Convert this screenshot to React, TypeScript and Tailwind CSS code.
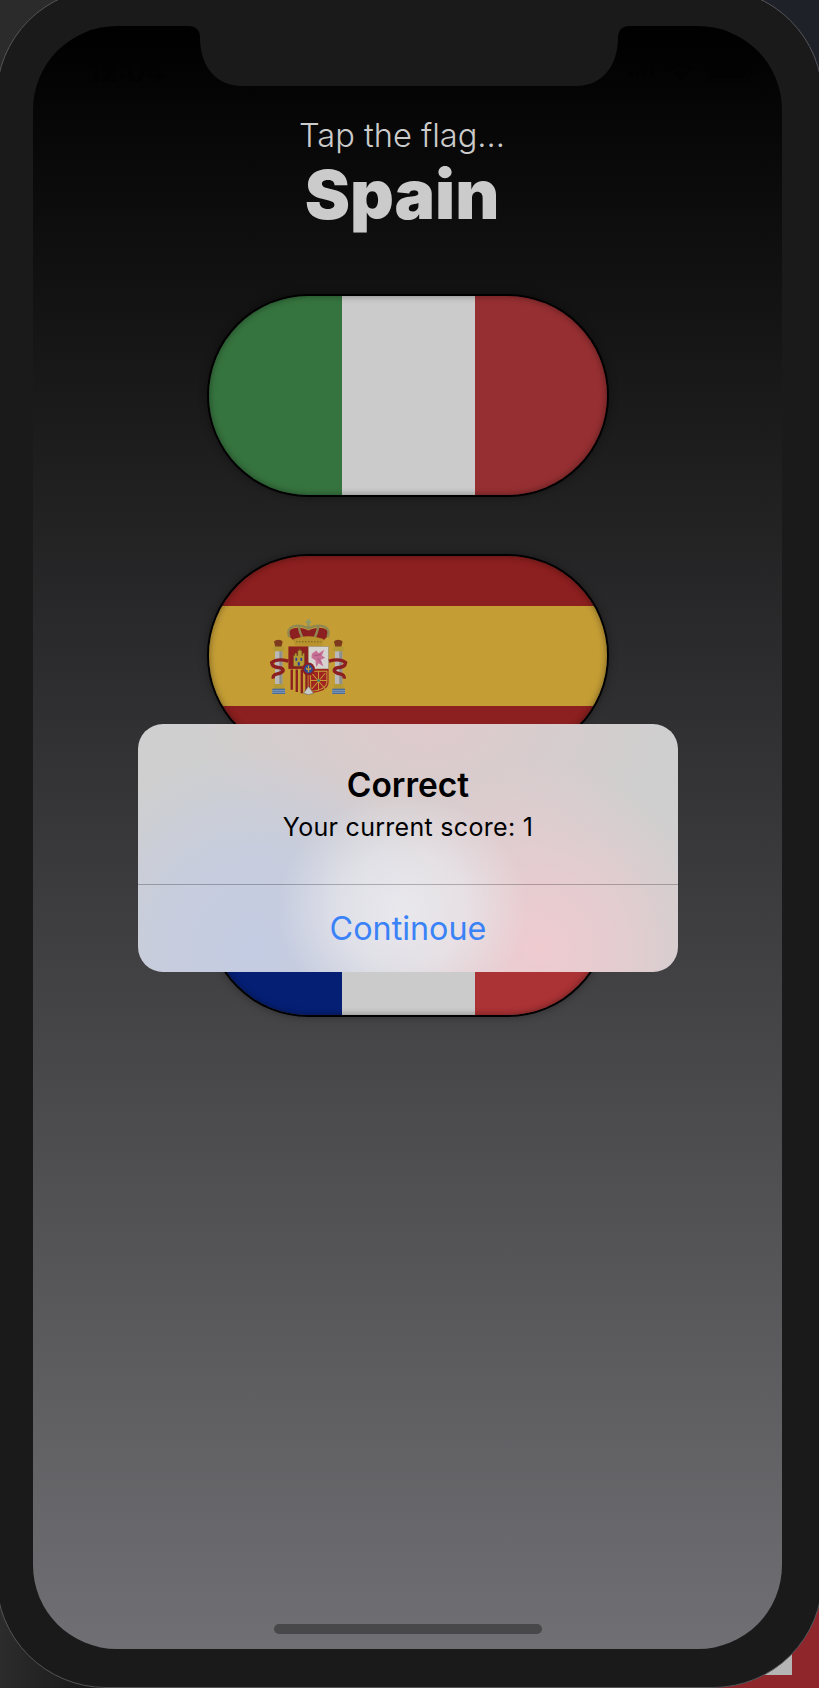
function Notch() {
  return (
    <svg width="442" height="60" viewBox="0 0 442 60" className="absolute top-0 left-[155px]">
      <path d="M0 0C8 0 12 4 12 12C12 40 28 60 54 60H388C414 60 430 40 430 12C430 4 434 0 442 0Z" fill="#1a1a1a" />
    </svg>
  )
}

function StatusBar() {
  return (
    <div className="h-[74px] pt-[30px] pl-[55px] pr-[29px] flex items-start justify-between text-[#020202]">
      <span className="text-[29px] leading-[32px] font-medium">12:04</span>
      <div className="flex items-center gap-[14px] h-[32px]">
        <div className="flex items-end gap-[3px] h-[10px]">
          <span className="w-[4px] h-[5px] bg-[#020202] rounded-[1px]" />
          <span className="w-[4px] h-[6px] bg-[#020202] rounded-[1px]" />
          <span className="w-[4px] h-[8px] bg-[#020202] rounded-[1px]" />
          <span className="w-[4px] h-[10px] bg-[#020202] rounded-[1px]" />
        </div>
        <svg width="26" height="19" viewBox="0 0 26 19" fill="none" stroke="#020202" strokeWidth="3">
          <path d="M2 7C8 1 18 1 24 7M6.500 11.500C10 8 16 8 19.500 11.500" />
          <path d="M9.500 14.500L13 18L16.500 14.500C14.500 12.700 11.500 12.700 9.500 14.500Z" fill="#020202" stroke="none" />
        </svg>
        <div className="flex items-center gap-[1px]">
          <div className="w-[41px] h-[20px] rounded-[5px] border border-[#020202] p-[2px]">
            <div className="w-full h-full rounded-[3px] bg-[#020202]" />
          </div>
          <span className="w-[3px] h-[7px] rounded-r-[2px] bg-[#020202]" />
        </div>
      </div>
    </div>
  )
}

function CoatOfArms() {
  // coordinates follow a 720x600 crop of the flag, so the viewBox is that crop's window
  return (
    <svg width="79" height="79" viewBox="240 230 236 236" className="shrink-0 ml-[61px]">
      {/* crown */}
      <path d="M295 285C290 262 325 255 355 270C385 255 420 262 415 285L395 305H315Z" fill="#8c1f1f" />
      <path d="M298 290C283 256 325 248 355 264C385 248 427 256 412 290M355 264V245M325 256C328 275 335 290 340 300M385 256C382 275 375 290 370 300" fill="none" stroke="#8f8850" strokeWidth="7" />
      <path d="M352 236h6v6h5v6h-5v8h-6v-8h-5v-6h5z" fill="#8f9a6a" />
      <path d="M308 298C335 284 375 284 402 298L394 316H316Z" fill="#b8922c" />
      <path d="M318 304h74" stroke="#6c5a20" strokeWidth="3" strokeDasharray="4 5" />
      {/* shield */}
      <rect x="295" y="318" width="60" height="67" fill="#8c1f1f" />
      <rect x="355" y="318" width="60" height="67" fill="#d6d2d0" stroke="#9a8f70" strokeWidth="2" />
      <path d="M295 385H355V458C325 460 295 445 295 420Z" fill="#c49d35" />
      <path d="M305 387V447M320 387V454M335 387V458M349 387V458" stroke="#8c1f1f" strokeWidth="7" />
      <path d="M355 385H415V425C415 448 385 456 355 458Z" fill="#a02420" />
      <path d="M360 392L410 392L410 425C408 442 385 450 362 452ZM385 392V450M360 420H410M365 398L405 445M405 398L365 445" fill="none" stroke="#c49d35" strokeWidth="3" />
      <circle cx="385" cy="420" r="4" fill="#3a8a70" />
      {/* castle */}
      <path d="M310 377V345H314V338H320V345H323V330H328V325H330V330H335V345H337V338H343V377Z" fill="#b39a35" stroke="#564a1a" strokeWidth="1" />
      <rect x="316" y="352" width="5" height="9" fill="#2440a0" />
      <rect x="331" y="352" width="5" height="9" fill="#2440a0" />
      <rect x="323" y="365" width="6" height="10" fill="#2440a0" />
      {/* lion */}
      <path d="M365 340L378 330L385 338L402 328L395 345L405 352L392 358L400 378L385 368L378 380L376 360L364 352Z" fill="#c86f96" />
      <path d="M372 346L392 342M382 352L392 366" stroke="#8c4a6a" strokeWidth="2" fill="none" />
      {/* centre oval */}
      <circle cx="355" cy="385" r="19" fill="#8c1f1f" />
      <circle cx="355" cy="385" r="13" fill="#2c4a9a" />
      <path d="M355 375V395M348 382L352 388M362 382L358 388" stroke="#c49d35" strokeWidth="4" />
      {/* base of the shield */}
      <path d="M340 458L355 437L370 458L355 462Z" fill="#c9c9c5" stroke="#565650" strokeWidth="1.500" />
      {/* left pillar */}
      <rect x="255" y="332" width="22" height="100" fill="#b9b9b9" />
      <rect x="268" y="332" width="9" height="100" fill="#8e8e8a" />
      <rect x="251" y="318" width="30" height="14" fill="#b39a35" />
      <path d="M252 304C256 296 274 296 278 304L274 318H256Z" fill="#7d3a1c" />
      <rect x="252" y="430" width="28" height="15" fill="#b39a35" />
      <rect x="247" y="444" width="38" height="16" fill="#4a6c9a" />
      <path d="M247 450H285M247 455H285" stroke="#9fb0c4" strokeWidth="2" />
      {/* right pillar */}
      <rect x="434" y="332" width="22" height="100" fill="#b9b9b9" />
      <rect x="447" y="332" width="9" height="100" fill="#8e8e8a" />
      <rect x="430" y="318" width="30" height="14" fill="#b39a35" />
      <path d="M431 304C435 296 453 296 457 304L453 318H435Z" fill="#7d3a1c" />
      <rect x="431" y="430" width="28" height="15" fill="#b39a35" />
      <rect x="426" y="444" width="38" height="16" fill="#4a6c9a" />
      <path d="M426 450H464M426 455H464" stroke="#9fb0c4" strokeWidth="2" />
      {/* ribbons */}
      <path d="M295 362C275 356 255 358 245 366C246 376 252 380 272 382C285 388 280 396 262 400C252 402 248 406 250 414" fill="none" stroke="#8c1f1f" strokeWidth="10" />
      <path d="M416 362C436 356 456 358 466 366C465 376 459 380 439 382C426 388 431 396 449 400C459 402 463 406 461 414" fill="none" stroke="#8c1f1f" strokeWidth="10" />
    </svg>
  )
}

function FlagPill({ children, vertical = false }: { children: React.ReactNode; vertical?: boolean }) {
  return (
    <div className="relative w-[398px] h-[199px] rounded-full shadow-[0_0_0_2px_#000,0_0_8px_2px_rgba(0,0,0,0.35)]">
      <div className={`w-full h-full rounded-full overflow-hidden flex ${vertical ? 'flex-col' : ''}`}>
        {children}
      </div>
      <div className="absolute inset-0 rounded-full shadow-[inset_0_0_7px_rgba(0,0,0,0.4)]" />
    </div>
  )
}

function Alert() {
  return (
    <div className="absolute top-[698px] left-[105px] w-[540px] h-[248px] rounded-[25px] overflow-hidden flex flex-col bg-[radial-gradient(ellipse_125px_115px_at_265px_185px,#e9e8ed_0%,rgba(233,232,237,0.7)_50%,rgba(233,232,237,0)_100%),radial-gradient(ellipse_190px_200px_at_115px_225px,#c4cce3_0%,rgba(196,204,227,0.7)_50%,rgba(196,204,227,0)_100%),radial-gradient(ellipse_180px_190px_at_400px_225px,#efcbd0_0%,rgba(239,203,208,0.6)_50%,rgba(239,203,208,0)_100%),radial-gradient(ellipse_240px_150px_at_290px_0px,#dfcacc_0%,rgba(223,202,204,0)_100%),linear-gradient(#cfcfcf,#cfcfcf)]">
      <div className="h-[160px] shrink-0 pt-[37px] flex flex-col items-center text-black">
        <span className="text-[33.500px] leading-[48px] font-semibold">Correct</span>
        <span className="text-[25px] leading-[36px] tracking-[0.3px]">Your current score: 1</span>
      </div>
      <div className="h-px shrink-0 bg-[#000000]/25" />
      <div className="flex-1 flex items-center justify-center pt-[2px]">
        <span className="text-[32.300px] font-normal text-[#3a82f7]">Continoue</span>
      </div>
    </div>
  )
}

export default function App() {
  return (
    <div className="relative w-[819px] h-[1688px] overflow-hidden bg-[#1a1a1a] font-['Inter',sans-serif]">
      {/* what shows round the device's corners */}
      <div className="absolute top-0 left-0 w-[120px] h-[120px] bg-[#2b2b2b]" />
      <div className="absolute top-0 right-0 w-[120px] h-[120px] bg-[#1e2128]" />
      <div className="absolute bottom-0 left-0 w-[120px] h-[120px] bg-[linear-gradient(to_right,#2c2c2c,#121212)]" />
      <div className="absolute bottom-0 right-0 w-[120px] h-[120px] bg-[#8e262b]" />
      <div className="absolute top-[1652px] left-[763px] w-[29px] h-[23px] bg-[#b5b5b5]" />

      <div className="relative -mt-[12px] -mx-[4px] h-[1700px] rounded-[110px] border border-[#55555a] bg-[#1a1a1a] pt-[37px] pl-[36px] pr-[40px] pb-[38px] flex flex-col">
        <div className="relative flex-1 rounded-[84px] bg-[linear-gradient(to_bottom,#000000_0%,#707074_100%)] flex flex-col items-center">
          <Notch />
          <div className="w-full">
            <StatusBar />
          </div>
          <div className="flex flex-col items-center mr-[11px]">
            <p className="mt-[15px] text-[32.600px] leading-[40px] font-light text-[#cbcbcb]">Tap the flag...</p>
            <h1 className="mt-[3px] text-[68px] leading-[72px] font-black text-[#cbcbcb]">Spain</h1>
          </div>

          <div className="mt-[66px] flex flex-col gap-[61px]">
            <FlagPill>
              <div className="w-[133px] bg-[#36743f]" />
              <div className="w-[133px] bg-[#cbcbcb]" />
              <div className="w-[132px] bg-[#962f32]" />
            </FlagPill>
            <FlagPill vertical>
              <div className="h-[50px] bg-[#8c1f1f]" />
              <div className="h-[100px] bg-[#c49d35] flex items-center">
                <CoatOfArms />
              </div>
              <div className="h-[49px] bg-[#8c1f1f]" />
            </FlagPill>
            <FlagPill>
              <div className="w-[133px] bg-[#051f75]" />
              <div className="w-[133px] bg-[#cbcbcb]" />
              <div className="w-[132px] bg-[#ab3235]" />
            </FlagPill>
          </div>

          <Alert />

          <div className="mt-auto mb-[15px] w-[268px] h-[10px] rounded-full bg-[#48484a]" />
        </div>
      </div>
    </div>
  )
}
